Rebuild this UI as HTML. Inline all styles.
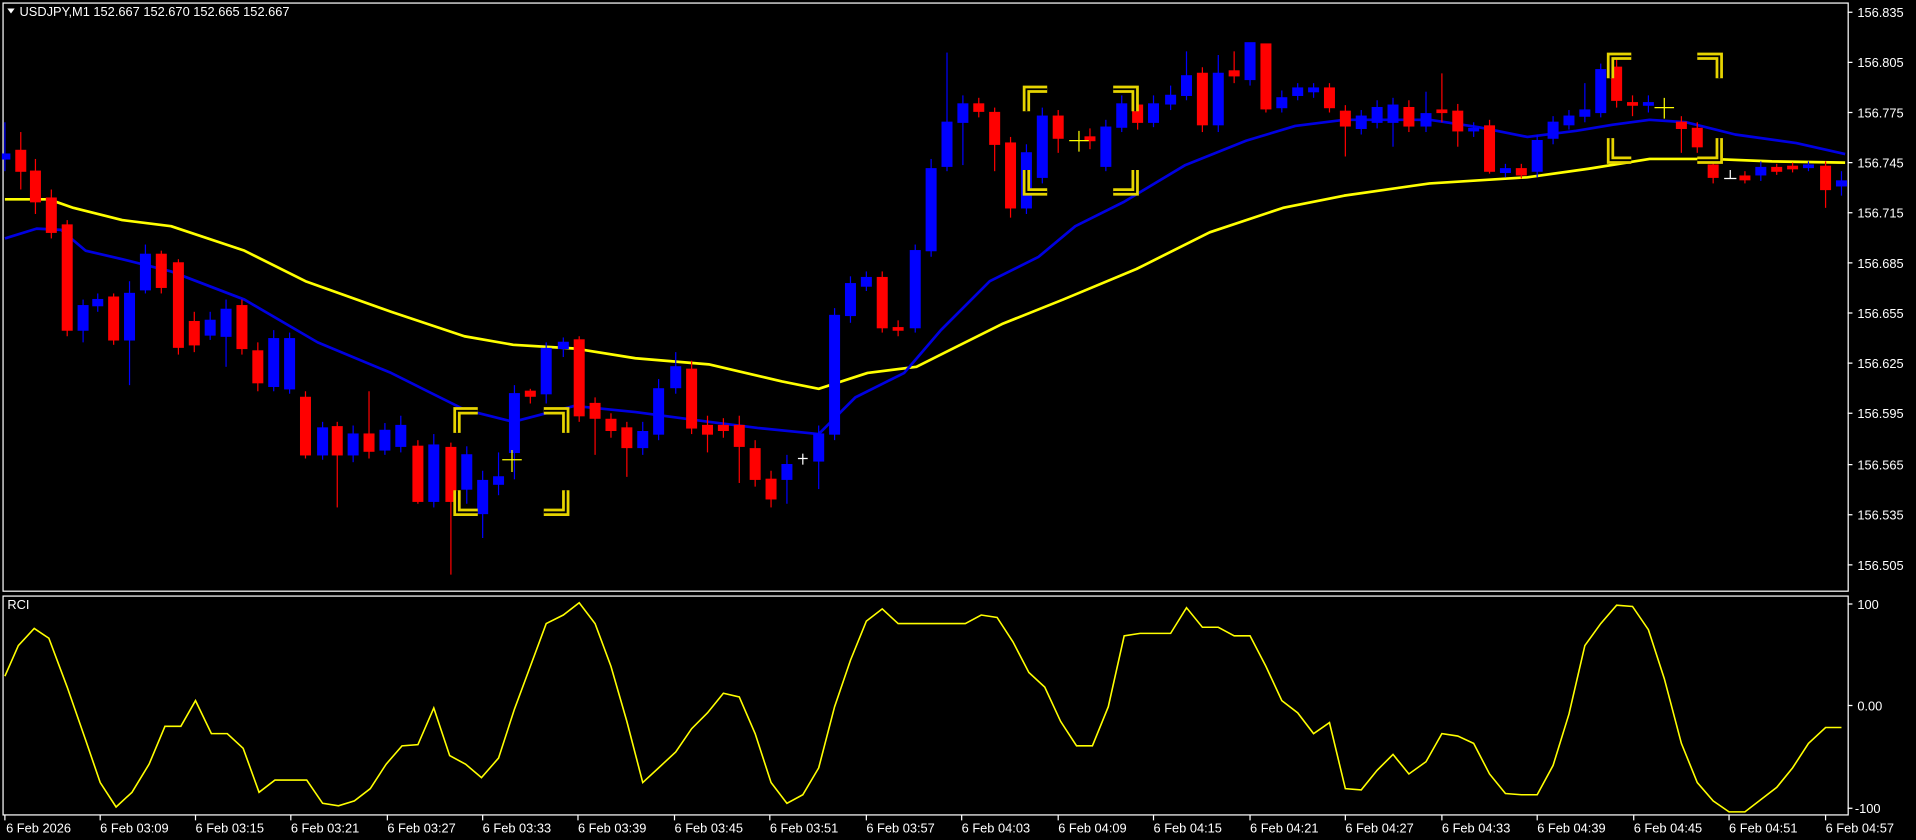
<!DOCTYPE html>
<html><head><meta charset="utf-8"><style>
html,body{margin:0;padding:0;background:#000;overflow:hidden}
svg{display:block}
text{font-family:"Liberation Sans",sans-serif;font-size:10.5px;fill:#fff}
</style></head><body>
<svg width="1916" height="840" viewBox="0 0 1568 687" preserveAspectRatio="none" xmlns="http://www.w3.org/2000/svg">
<rect width="1568" height="687" fill="#000"/>
<rect x="2.5" y="2.5" width="1510" height="481" fill="none" stroke="#fff" stroke-width="1"/>
<rect x="2.5" y="487.5" width="1510" height="179" fill="none" stroke="#fff" stroke-width="1"/>
<path d="M6 7 L12 7 L9 11 Z" fill="#fff"/>
<text x="16" y="13">USDJPY,M1  152.667 152.670 152.665 152.667</text>
<text x="6" y="498">RCI</text>

<polyline fill="none" stroke="#ffff00" stroke-width="2.2" stroke-linejoin="round" points="4,163 40,163 60,170 100,180 140,185 200,205 250,230 320,255 380,275 420,282 470,285 520,293 580,298 640,312 670,318 710,305 750,300 780,285 820,265 870,245 930,220 990,190 1050,170 1100,160 1170,150 1250,145 1300,138 1350,130 1400,130 1450,132 1510,133"/>
<polyline fill="none" stroke="#0000e0" stroke-width="2.2" stroke-linejoin="round" points="4,195 30,187 50,188 70,205 100,212 140,222 200,245 260,280 320,305 350,320 380,335 420,345 470,332 520,337 580,345 620,350 670,355 700,325 740,305 770,270 810,230 850,210 880,185 920,165 970,135 1020,115 1060,103 1100,98 1170,98 1210,104 1250,112 1290,107 1320,102 1350,98 1380,100 1420,110 1470,117 1510,126"/>

<g fill="#ff0000" stroke="#ff0000" stroke-width="1">
<line x1="17" y1="108" x2="17" y2="155"/><rect x="13" y="123" width="8" height="17"/>
<line x1="29" y1="130" x2="29" y2="175"/><rect x="25" y="140" width="8" height="25"/>
<line x1="42" y1="155" x2="42" y2="195"/><rect x="38" y="162" width="8" height="28"/>
<line x1="55" y1="180" x2="55" y2="275"/><rect x="51" y="184" width="8" height="86"/>
<line x1="93" y1="240" x2="93" y2="282"/><rect x="89" y="243" width="8" height="35"/>
<line x1="132" y1="205" x2="132" y2="240"/><rect x="128" y="208" width="8" height="27"/>
<line x1="146" y1="212" x2="146" y2="290"/><rect x="142" y="215" width="8" height="69"/>
<line x1="159" y1="255" x2="159" y2="288"/><rect x="155" y="263" width="8" height="19"/>
<line x1="198" y1="245" x2="198" y2="290"/><rect x="194" y="250" width="8" height="35"/>
<line x1="211" y1="280" x2="211" y2="320"/><rect x="207" y="287" width="8" height="26"/>
<line x1="250" y1="320" x2="250" y2="375"/><rect x="246" y="325" width="8" height="47"/>
<line x1="276" y1="345" x2="276" y2="415"/><rect x="272" y="349" width="8" height="23"/>
<line x1="302" y1="320" x2="302" y2="375"/><rect x="298" y="355" width="8" height="14"/>
<line x1="342" y1="360" x2="342" y2="412"/><rect x="338" y="365" width="8" height="45"/>
<line x1="369" y1="362" x2="369" y2="470"/><rect x="365" y="366" width="8" height="44"/>
<line x1="434" y1="318" x2="434" y2="330"/><rect x="430" y="320" width="8" height="4"/>
<line x1="474" y1="275" x2="474" y2="345"/><rect x="470" y="278" width="8" height="62"/>
<line x1="487" y1="325" x2="487" y2="372"/><rect x="483" y="330" width="8" height="12"/>
<line x1="500" y1="338" x2="500" y2="358"/><rect x="496" y="343" width="8" height="9"/>
<line x1="513" y1="345" x2="513" y2="390"/><rect x="509" y="350" width="8" height="16"/>
<line x1="566" y1="295" x2="566" y2="355"/><rect x="562" y="302" width="8" height="48"/>
<line x1="579" y1="340" x2="579" y2="370"/><rect x="575" y="348" width="8" height="7"/>
<line x1="592" y1="342" x2="592" y2="358"/><rect x="588" y="348" width="8" height="4"/>
<line x1="605" y1="340" x2="605" y2="395"/><rect x="601" y="348" width="8" height="17"/>
<line x1="618" y1="360" x2="618" y2="398"/><rect x="614" y="367" width="8" height="25"/>
<line x1="631" y1="385" x2="631" y2="415"/><rect x="627" y="392" width="8" height="16"/>
<line x1="722" y1="222" x2="722" y2="272"/><rect x="718" y="227" width="8" height="41"/>
<line x1="735" y1="262" x2="735" y2="275"/><rect x="731" y="268" width="8" height="2"/>
<line x1="801" y1="80" x2="801" y2="96"/><rect x="797" y="85" width="8" height="6"/>
<line x1="814" y1="88" x2="814" y2="140"/><rect x="810" y="92" width="8" height="26"/>
<line x1="827" y1="112" x2="827" y2="178"/><rect x="823" y="117" width="8" height="53"/>
<line x1="866" y1="90" x2="866" y2="125"/><rect x="862" y="95" width="8" height="18"/>
<line x1="892" y1="105" x2="892" y2="122"/><rect x="888" y="112" width="8" height="3"/>
<line x1="931" y1="80" x2="931" y2="106"/><rect x="927" y="86" width="8" height="14"/>
<line x1="984" y1="55" x2="984" y2="108"/><rect x="980" y="60" width="8" height="42"/>
<line x1="1010" y1="42" x2="1010" y2="68"/><rect x="1006" y="58" width="8" height="4"/>
<line x1="1036" y1="36" x2="1036" y2="92"/><rect x="1032" y="36" width="8" height="53"/>
<line x1="1088" y1="68" x2="1088" y2="92"/><rect x="1084" y="72" width="8" height="16"/>
<line x1="1101" y1="86" x2="1101" y2="128"/><rect x="1097" y="91" width="8" height="12"/>
<line x1="1153" y1="82" x2="1153" y2="108"/><rect x="1149" y="88" width="8" height="15"/>
<line x1="1180" y1="60" x2="1180" y2="100"/><rect x="1176" y="90" width="8" height="2"/>
<line x1="1193" y1="85" x2="1193" y2="120"/><rect x="1189" y="91" width="8" height="16"/>
<line x1="1219" y1="98" x2="1219" y2="142"/><rect x="1215" y="103" width="8" height="37"/>
<line x1="1245" y1="134" x2="1245" y2="146"/><rect x="1241" y="138" width="8" height="5"/>
<line x1="1323" y1="48" x2="1323" y2="88"/><rect x="1319" y="55" width="8" height="27"/>
<line x1="1336" y1="78" x2="1336" y2="95"/><rect x="1332" y="84" width="8" height="2"/>
<line x1="1376" y1="95" x2="1376" y2="125"/><rect x="1372" y="100" width="8" height="5"/>
<line x1="1389" y1="100" x2="1389" y2="125"/><rect x="1385" y="105" width="8" height="15"/>
<line x1="1402" y1="130" x2="1402" y2="150"/><rect x="1398" y="135" width="8" height="10"/>
<line x1="1428" y1="140" x2="1428" y2="150"/><rect x="1424" y="144" width="8" height="3"/>
<line x1="1454" y1="134" x2="1454" y2="143"/><rect x="1450" y="137" width="8" height="3"/>
<line x1="1467" y1="133" x2="1467" y2="141"/><rect x="1463" y="136" width="8" height="2"/>
<line x1="1494" y1="132" x2="1494" y2="170"/><rect x="1490" y="136" width="8" height="19"/>
</g>
<g fill="#0000ff" stroke="#0000ff" stroke-width="1">
<line x1="4" y1="100" x2="4" y2="140"/><rect x="2" y="126" width="6" height="4"/>
<line x1="68" y1="245" x2="68" y2="280"/><rect x="64" y="250" width="8" height="20"/>
<line x1="80" y1="240" x2="80" y2="255"/><rect x="76" y="245" width="8" height="5"/>
<line x1="106" y1="230" x2="106" y2="315"/><rect x="102" y="240" width="8" height="38"/>
<line x1="119" y1="200" x2="119" y2="240"/><rect x="115" y="208" width="8" height="29"/>
<line x1="172" y1="255" x2="172" y2="278"/><rect x="168" y="262" width="8" height="12"/>
<line x1="185" y1="245" x2="185" y2="300"/><rect x="181" y="253" width="8" height="22"/>
<line x1="224" y1="270" x2="224" y2="320"/><rect x="220" y="277" width="8" height="39"/>
<line x1="237" y1="272" x2="237" y2="322"/><rect x="233" y="277" width="8" height="41"/>
<line x1="264" y1="345" x2="264" y2="376"/><rect x="260" y="350" width="8" height="22"/>
<line x1="289" y1="348" x2="289" y2="378"/><rect x="285" y="355" width="8" height="17"/>
<line x1="315" y1="346" x2="315" y2="372"/><rect x="311" y="352" width="8" height="16"/>
<line x1="328" y1="340" x2="328" y2="370"/><rect x="324" y="348" width="8" height="17"/>
<line x1="355" y1="355" x2="355" y2="415"/><rect x="351" y="364" width="8" height="46"/>
<line x1="382" y1="365" x2="382" y2="412"/><rect x="378" y="372" width="8" height="28"/>
<line x1="395" y1="385" x2="395" y2="440"/><rect x="391" y="393" width="8" height="27"/>
<line x1="408" y1="370" x2="408" y2="405"/><rect x="404" y="390" width="8" height="6"/>
<line x1="421" y1="315" x2="421" y2="392"/><rect x="417" y="322" width="8" height="48"/>
<line x1="447" y1="280" x2="447" y2="330"/><rect x="443" y="285" width="8" height="37"/>
<line x1="461" y1="276" x2="461" y2="292"/><rect x="457" y="280" width="8" height="5"/>
<line x1="526" y1="345" x2="526" y2="372"/><rect x="522" y="353" width="8" height="13"/>
<line x1="539" y1="310" x2="539" y2="360"/><rect x="535" y="318" width="8" height="37"/>
<line x1="553" y1="288" x2="553" y2="322"/><rect x="549" y="300" width="8" height="17"/>
<line x1="644" y1="372" x2="644" y2="412"/><rect x="640" y="380" width="8" height="12"/>
<line x1="670" y1="348" x2="670" y2="400"/><rect x="666" y="355" width="8" height="22"/>
<line x1="683" y1="252" x2="683" y2="360"/><rect x="679" y="258" width="8" height="97"/>
<line x1="696" y1="226" x2="696" y2="264"/><rect x="692" y="232" width="8" height="26"/>
<line x1="709" y1="222" x2="709" y2="238"/><rect x="705" y="227" width="8" height="7"/>
<line x1="749" y1="200" x2="749" y2="272"/><rect x="745" y="205" width="8" height="63"/>
<line x1="762" y1="130" x2="762" y2="210"/><rect x="758" y="138" width="8" height="67"/>
<line x1="775" y1="43" x2="775" y2="140"/><rect x="771" y="100" width="8" height="36"/>
<line x1="788" y1="78" x2="788" y2="135"/><rect x="784" y="85" width="8" height="15"/>
<line x1="840" y1="118" x2="840" y2="175"/><rect x="836" y="125" width="8" height="45"/>
<line x1="853" y1="88" x2="853" y2="150"/><rect x="849" y="95" width="8" height="50"/>
<line x1="905" y1="98" x2="905" y2="140"/><rect x="901" y="104" width="8" height="32"/>
<line x1="918" y1="78" x2="918" y2="108"/><rect x="914" y="85" width="8" height="19"/>
<line x1="944" y1="78" x2="944" y2="104"/><rect x="940" y="85" width="8" height="15"/>
<line x1="958" y1="70" x2="958" y2="90"/><rect x="954" y="78" width="8" height="7"/>
<line x1="971" y1="42" x2="971" y2="82"/><rect x="967" y="62" width="8" height="16"/>
<line x1="997" y1="45" x2="997" y2="108"/><rect x="993" y="60" width="8" height="42"/>
<line x1="1023" y1="35" x2="1023" y2="70"/><rect x="1019" y="35" width="8" height="30"/>
<line x1="1049" y1="74" x2="1049" y2="92"/><rect x="1045" y="80" width="8" height="8"/>
<line x1="1062" y1="68" x2="1062" y2="82"/><rect x="1058" y="72" width="8" height="6"/>
<line x1="1075" y1="68" x2="1075" y2="80"/><rect x="1071" y="72" width="8" height="3"/>
<line x1="1114" y1="90" x2="1114" y2="110"/><rect x="1110" y="95" width="8" height="10"/>
<line x1="1127" y1="82" x2="1127" y2="105"/><rect x="1123" y="88" width="8" height="12"/>
<line x1="1140" y1="80" x2="1140" y2="120"/><rect x="1136" y="86" width="8" height="14"/>
<line x1="1167" y1="75" x2="1167" y2="108"/><rect x="1163" y="93" width="8" height="10"/>
<line x1="1206" y1="100" x2="1206" y2="112"/><rect x="1202" y="105" width="8" height="2"/>
<line x1="1232" y1="134" x2="1232" y2="145"/><rect x="1228" y="138" width="8" height="3"/>
<line x1="1258" y1="110" x2="1258" y2="145"/><rect x="1254" y="115" width="8" height="25"/>
<line x1="1271" y1="95" x2="1271" y2="118"/><rect x="1267" y="100" width="8" height="13"/>
<line x1="1284" y1="90" x2="1284" y2="106"/><rect x="1280" y="95" width="8" height="7"/>
<line x1="1297" y1="68" x2="1297" y2="100"/><rect x="1293" y="90" width="8" height="5"/>
<line x1="1310" y1="52" x2="1310" y2="96"/><rect x="1306" y="57" width="8" height="35"/>
<line x1="1349" y1="78" x2="1349" y2="92"/><rect x="1345" y="84" width="8" height="2"/>
<line x1="1441" y1="132" x2="1441" y2="148"/><rect x="1437" y="137" width="8" height="6"/>
<line x1="1480" y1="132" x2="1480" y2="140"/><rect x="1476" y="135" width="8" height="2"/>
<line x1="1507" y1="140" x2="1507" y2="160"/><rect x="1503" y="148" width="8" height="4"/>
</g>
<g stroke="#ffff00" stroke-width="1">
<path d="M411 376H427M419 368V386"/><path d="M875 115H891M883 107V124"/><path d="M1354 88H1370M1362 80V97"/>
</g>
<g stroke="#fff" stroke-width="1"><path d="M653 375H661M657 371V380"/><path d="M1411 146H1421M1416 139V146"/></g>

<g fill="none" stroke-linejoin="miter">
<g stroke="#e6d400" stroke-width="6">
<path d="M374 354V336H391"/><path d="M445 336H463V354"/><path d="M374 401V419H391"/><path d="M445 419H463V401"/>
<path d="M840 91V73H857"/><path d="M911 73H929V91"/><path d="M840 139V157H857"/><path d="M911 157H929V139"/>
<path d="M1318 64V46H1335"/><path d="M1389 46H1407V64"/><path d="M1318 113V131H1335"/><path d="M1389 131H1407V113"/>
</g>
<g stroke="#000" stroke-width="1.5">
<path d="M374 354V336H391"/><path d="M445 336H463V354"/><path d="M374 401V419H391"/><path d="M445 419H463V401"/>
<path d="M840 91V73H857"/><path d="M911 73H929V91"/><path d="M840 139V157H857"/><path d="M911 157H929V139"/>
<path d="M1318 64V46H1335"/><path d="M1389 46H1407V64"/><path d="M1318 113V131H1335"/><path d="M1389 131H1407V113"/>
</g>
</g>

<polyline fill="none" stroke="#ffff00" stroke-width="1.3" points="4,553 15,528 28,514 40,522 55,562 70,605 82,640 95,660 108,648 122,625 135,594 148,594 160,573 173,600 186,600 199,612 212,648 225,638 238,638 251,638 264,657 277,659 290,655 303,645 316,625 329,610 342,609 355,579 368,618 381,625 394,636 408,620 421,580 434,545 447,510 461,503 474,493 487,510 500,545 513,590 526,640 539,628 553,615 566,596 579,583 592,567 605,570 618,600 631,640 644,657 657,650 670,628 683,578 696,540 709,508 722,498 735,510 760,510 790,510 803,503 816,505 829,525 842,550 855,562 868,590 881,610 894,610 907,578 920,520 933,518 958,518 971,497 984,513 997,513 1010,520 1023,520 1036,545 1049,573 1062,583 1075,600 1088,591 1101,645 1114,646 1127,630 1140,617 1153,633 1167,623 1180,600 1193,602 1206,608 1219,633 1232,649 1245,650 1258,650 1271,626 1284,584 1297,528 1310,510 1323,495 1336,496 1349,515 1362,555 1376,608 1389,640 1402,655 1415,664 1428,664 1441,654 1454,644 1467,628 1480,608 1494,595 1507,595"/>

<g stroke="#fff" stroke-width="1">
<path d="M1512 10h4M1512 51h4M1512 92h4M1512 133h4M1512 174h4M1512 215h4M1512 256h4M1512 297h4M1512 338h4M1512 380h4M1512 421h4M1512 462h4M1512 494h4M1512 577h4M1512 661h4"/>
</g>
<g>
<text x="1520" y="14">156.835</text><text x="1520" y="55">156.805</text><text x="1520" y="96">156.775</text><text x="1520" y="137">156.745</text><text x="1520" y="178">156.715</text><text x="1520" y="219">156.685</text><text x="1520" y="260">156.655</text><text x="1520" y="301">156.625</text><text x="1520" y="342">156.595</text><text x="1520" y="384">156.565</text><text x="1520" y="425">156.535</text><text x="1520" y="466">156.505</text>
<text x="1520" y="498">100</text><text x="1520" y="581">0.00</text><text x="1518" y="665">-100</text>
</g>
<g stroke="#fff" stroke-width="1"><path d="M4 667v4M82 667v4M160 667v4M238 667v4M317 667v4M395 667v4M473 667v4M552 667v4M630 667v4M709 667v4M787 667v4M866 667v4M944 667v4M1023 667v4M1101 667v4M1180 667v4M1258 667v4M1337 667v4M1415 667v4M1494 667v4"/></g>
<g>
<text x="5" y="681">6 Feb 2026</text><text x="82" y="681">6 Feb 03:09</text><text x="160" y="681">6 Feb 03:15</text><text x="238" y="681">6 Feb 03:21</text><text x="317" y="681">6 Feb 03:27</text><text x="395" y="681">6 Feb 03:33</text><text x="473" y="681">6 Feb 03:39</text><text x="552" y="681">6 Feb 03:45</text><text x="630" y="681">6 Feb 03:51</text><text x="709" y="681">6 Feb 03:57</text><text x="787" y="681">6 Feb 04:03</text><text x="866" y="681">6 Feb 04:09</text><text x="944" y="681">6 Feb 04:15</text><text x="1023" y="681">6 Feb 04:21</text><text x="1101" y="681">6 Feb 04:27</text><text x="1180" y="681">6 Feb 04:33</text><text x="1258" y="681">6 Feb 04:39</text><text x="1337" y="681">6 Feb 04:45</text><text x="1415" y="681">6 Feb 04:51</text><text x="1494" y="681">6 Feb 04:57</text>
</g>
</svg>
</body></html>
